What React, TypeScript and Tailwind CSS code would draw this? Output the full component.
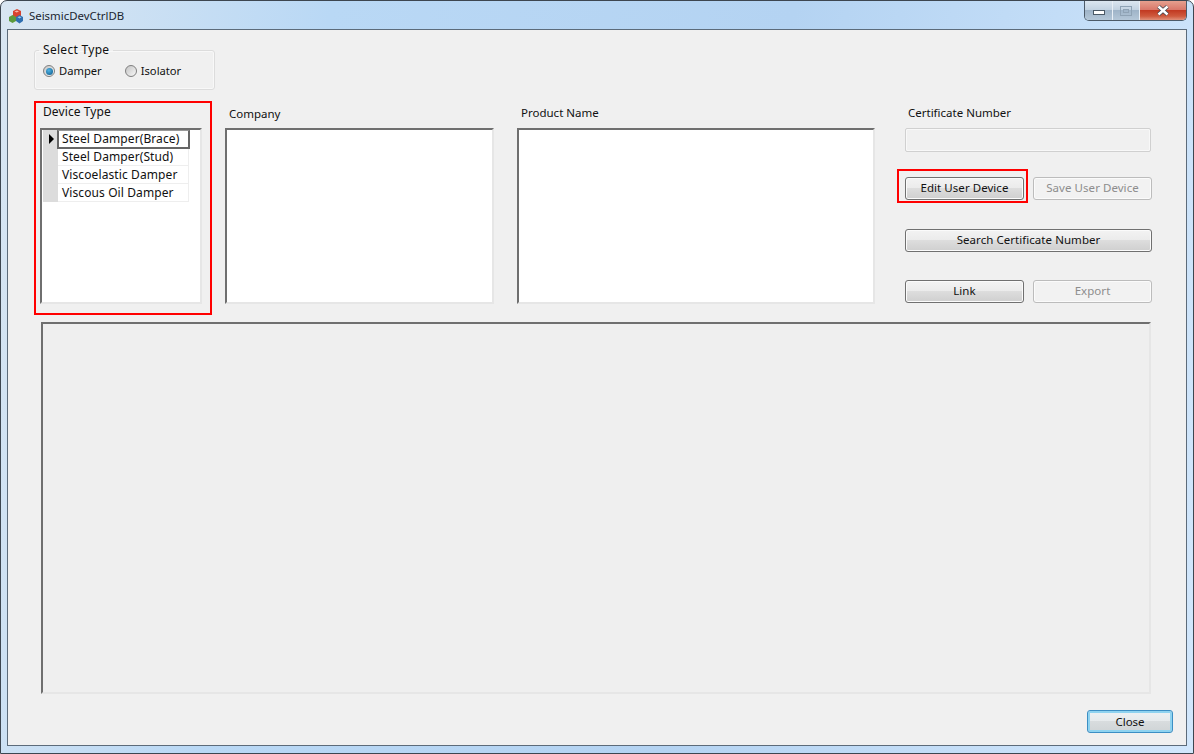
import React from 'react';

const rows = ['Steel Damper(Brace)', 'Steel Damper(Stud)', 'Viscoelastic Damper', 'Viscous Oil Damper'];

function WinButton({ label, disabled, className = '' }: { label: string; disabled?: boolean; className?: string }) {
  const look = disabled
    ? 'border-[#bcbcbc] text-[#8d8d8d] bg-[#f2f2f2]'
    : 'border-[#707070] text-[#111] bg-[linear-gradient(180deg,#f3f3f3_0%,#ebebeb_48%,#dddddd_50%,#cfcfcf_100%)]';
  return (
    <button
      type="button"
      disabled={disabled}
      className={`h-[23px] rounded-[3px] border pb-[2px] text-[11.5px] leading-none tracking-[0.05px] shadow-[inset_0_0_0_1px_#fbfbfb] ${look} ${className}`}
    >
      {label}
    </button>
  );
}

function Sunken({ className = '', children }: { className?: string; children?: React.ReactNode }) {
  return (
    <div className={`border-2 border-t-[#6f6f6f] border-l-[#6f6f6f] border-r-[#e6e6e6] border-b-[#e6e6e6] ${className}`}>
      {children}
    </div>
  );
}

function Radio({ checked, label }: { checked?: boolean; label: string }) {
  return (
    <label className="flex items-center gap-[4px] text-[11.2px]">
      <span className="flex h-[12px] w-[12px] items-center justify-center rounded-full border border-[#7f7f7f] bg-[linear-gradient(135deg,#c4c4c4,#f8f8f8)]">
        {checked && <span className="h-[7px] w-[7px] rounded-full bg-[radial-gradient(circle_at_40%_35%,#4fb4e6,#0b5585)]" />}
      </span>
      {label}
    </label>
  );
}

export default function App() {
  return (
    <div className="flex h-[754px] w-[1194px] flex-col overflow-hidden rounded-t-[7px] border border-[#3d4650] bg-[linear-gradient(100deg,#d9e6f2_0%,#b9d8f5_25%,#b4d3f2_60%,#d2e7fc_100%)] font-['Noto_Sans'] text-[11.5px] text-[#111]">
      {/* Title bar */}
      <div className="flex h-[28px] shrink-0 items-start justify-between pl-[7px]">
        <div className="flex items-center gap-[5px] pt-[6px]">
          <svg width="16" height="16" viewBox="0 0 16 16">
            <path d="M5 3 L9 1 L13 3 L13 8 L9 10 L5 8 Z" fill="#d8432f" />
            <path d="M6.5 3.5 L9 2.4 L11 3.4 L8.6 4.6 Z" fill="#f5b7a8" />
            <path d="M1 9 L4.5 7 L8 9 L8 13 L4.5 15 L1 13 Z" fill="#5c9a3c" />
            <path d="M8 9 L11.5 7 L15 9 L15 13 L11.5 15.5 L8 13 Z" fill="#2f6fb0" />
            <path d="M9.5 9.2 L11.5 8.2 L13.5 9.2 L11.5 10.4 Z" fill="#9cc6ea" />
          </svg>
          <span className="text-[11.4px] text-[#1b2530]">SeismicDevCtrlDB</span>
        </div>
        <div className="mr-[6px] flex h-[20px] overflow-hidden rounded-b-[5px] border border-t-0 border-[#4c5a68]">
          <div className="flex w-[28px] items-end justify-center border-r border-[#e8eff6] bg-[linear-gradient(180deg,#dbe6f0_0%,#c3d3e2_45%,#9fb4c8_50%,#b4c7d8_100%)] pb-[5px]">
            <span className="h-[5px] w-[12px] border border-[#4a5966] bg-white" />
          </div>
          <div className="flex w-[27px] items-center justify-center border-r border-[#e8eff6] bg-[linear-gradient(180deg,#dbe6f0_0%,#c3d3e2_45%,#9fb4c8_50%,#b4c7d8_100%)]">
            <span className="flex h-[10px] w-[12px] items-center justify-center border border-[#8fa3b5]">
              <span className="h-[4px] w-[6px] border border-[#8fa3b5]" />
            </span>
          </div>
          <div className="flex w-[46px] items-center justify-center bg-[linear-gradient(180deg,#e5a08f_0%,#d9786a_45%,#c23a22_50%,#cf5a3e_80%,#e0907a_100%)]">
            <svg width="12" height="11" viewBox="0 0 12 11">
              <path d="M1.5 1.5 L10.5 9.5 M10.5 1.5 L1.5 9.5" stroke="#3d4650" strokeWidth="4" />
              <path d="M1.5 1.5 L10.5 9.5 M10.5 1.5 L1.5 9.5" stroke="#ffffff" strokeWidth="2.4" />
            </svg>
          </div>
        </div>
      </div>

      {/* Client area */}
      <div className="mx-[6px] mb-[7px] flex min-h-0 flex-1 flex-col border border-[#5c6b7a] bg-[#f0f0f0] pl-[26px]">
        <fieldset className="mt-[12px] h-[48px] w-[181px] rounded-[3px] border border-[#dcdcdc] pl-[3px] shadow-[inset_0_0_0_1px_#f8f8f8]">
          <legend className="ml-[1px] px-[4px] text-[12px] leading-[16px] tracking-[0.3px]">Select Type</legend>
          <div className="flex gap-[23px] pl-[5px] pt-[5px]">
            <Radio checked label="Damper" />
            <Radio label="Isolator" />
          </div>
        </fieldset>

        <div className="mt-[11px] flex h-[214px] items-start">
          {/* Device type (annotated in red) */}
          <div className="flex h-[214px] w-[178px] flex-col border-2 border-[#ff0000] pl-[4px]">
            <div className="pl-[3px] pt-[1px] text-[12px] leading-[16px] tracking-[0.1px]">Device Type</div>
            <Sunken className="mt-[8px] h-[176px] w-[162px] bg-white pl-[1px]">
              <div className="flex flex-col">
                {rows.map((row, i) => (
                  <div key={row} className="flex h-[18px] w-[146px] text-[12px] tracking-[0.1px]">
                    <div className="flex w-[15px] shrink-0 items-center justify-center bg-[#dcdcdc]">
                      {i === 0 && <span className="ml-[2px] h-0 w-0 border-y-[5px] border-l-[5px] border-y-transparent border-l-black" />}
                    </div>
                    <div
                      className={
                        i === 0
                          ? 'z-10 -ml-px h-[19px] w-[133px] shrink-0 border-2 border-t border-[#666] border-t-[#999] pl-[3px] leading-[16px]'
                          : 'w-[131px] shrink-0 border-b border-r border-[#eeeeee] pl-[4px] leading-[17px]'
                      }
                    >
                      {row}
                    </div>
                  </div>
                ))}
              </div>
            </Sunken>
          </div>

          <div className="ml-[13px] flex w-[269px] flex-col">
            <div className="pl-[4px] pt-[5px] leading-[16px]">Company</div>
            <Sunken className="mt-[6px] h-[176px] bg-white" />
          </div>

          <div className="ml-[23px] flex w-[358px] flex-col">
            <div className="pl-[4px] pt-[4px] leading-[16px]">Product Name</div>
            <Sunken className="mt-[7px] h-[176px] bg-white" />
          </div>

          <div className="ml-[30px] flex w-[247px] flex-col">
            <div className="pl-[3px] pt-[4px] leading-[16px]">Certificate Number</div>
            <div className="mt-[7px] h-[24px] w-[246px] rounded-[2px] border border-[#d0d0d0] bg-[#f0f0f0] shadow-[inset_0_0_0_1px_#f8f8f8]" />
            <div className="mt-[17px] flex h-[34px] items-start">
              <div className="-ml-[8px] flex h-[34px] w-[131px] items-start border-2 border-[#ff0000] pl-[6px] pt-[6px]">
                <WinButton label="Edit User Device" className="w-[119px]" />
              </div>
              <WinButton label="Save User Device" disabled className="ml-[5px] mt-[8px] w-[119px]" />
            </div>
            <WinButton label="Search Certificate Number" className="mt-[26px] w-[247px]" />
            <div className="mt-[28px] flex gap-[9px]">
              <WinButton label="Link" className="w-[119px]" />
              <WinButton label="Export" disabled className="w-[119px]" />
            </div>
          </div>
        </div>

        <Sunken className="ml-[7px] mt-[7px] h-[372px] w-[1110px] bg-[#efefef]" />

        <div className="mr-[13px] mt-[16px] flex justify-end">
          <button
            type="button"
            className="h-[23px] w-[86px] rounded-[3px] border border-[#3c8fc4] bg-[linear-gradient(180deg,#eef2f4_0%,#e6eaec_48%,#d8dcde_50%,#cfd4d6_100%)] text-[11.5px] leading-none text-[#111] shadow-[inset_0_0_0_2px_#8fd3f0]"
          >
            Close
          </button>
        </div>
      </div>
    </div>
  );
}
